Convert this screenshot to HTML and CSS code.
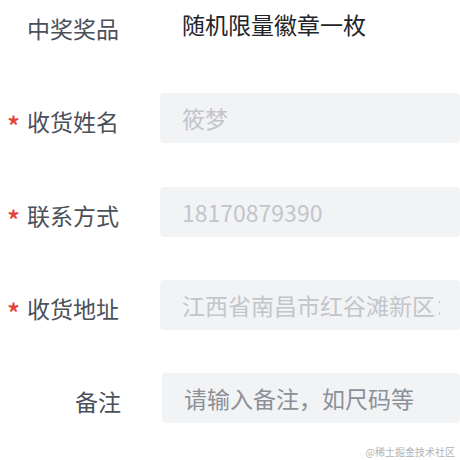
FILE: index.html
```html
<!DOCTYPE html>
<html lang="zh-CN">
<head>
<meta charset="utf-8">
<title>领奖信息</title>
<link rel="stylesheet" href="styles.css">
</head>
<body>
<div class="form">
  <div class="row">
    <div class="label">中奖奖品</div>
    <div class="value">随机限量徽章一枚</div>
  </div>
  <div class="row">
    <div class="label"><span class="req">*</span>收货姓名</div>
    <div class="field light"><span class="text">筱梦</span></div>
  </div>
  <div class="row">
    <div class="label"><span class="req">*</span>联系方式</div>
    <div class="field light"><span class="text">18170879390</span></div>
  </div>
  <div class="row">
    <div class="label"><span class="req">*</span>收货地址</div>
    <div class="field light"><span class="text">江西省南昌市红谷滩新区：红谷中大道</span></div>
  </div>
  <div class="row note">
    <div class="label">备注</div>
    <div class="field dark"><span class="text">请输入备注，如尺码等</span></div>
  </div>
</div>
<div class="watermark">@稀土掘金技术社区</div>
</body>
</html>
```
FILE: styles.css
```css
html, body {
  margin: 0;
  padding: 0;
  background: #ffffff;
}
body {
  width: 460px;
  height: 460px;
  position: relative;
  overflow: hidden;
  font-family: "Noto Sans CJK SC", "Noto Sans", sans-serif;
  font-size: 23px;
}
.form {
  display: flex;
  flex-direction: column;
  gap: 43.33px;
}
.row {
  display: grid;
  grid-template-columns: 119px minmax(0, 1fr);
  column-gap: 41px;
  align-items: center;
  height: 50px;
}
.row.note {
  margin-left: 2px;
}
.label {
  display: flex;
  justify-content: flex-end;
  align-items: center;
  color: #4b5059;
  line-height: 30px;
  padding-top: 6px;
  white-space: nowrap;
}
.req {
  color: #e5423b;
  font-size: 27px;
  font-weight: 500;
  margin-right: 7px;
  position: relative;
  top: 5px;
}
.value {
  color: #222428;
  padding-left: 22px;
  line-height: 30px;
  padding-bottom: 2px;
}
.field {
  min-width: 0;
  height: 50px;
  box-sizing: border-box;
  background: #f2f3f5;
  border-radius: 4px;
  padding: 0 20px 0 22px;
  display: flex;
  align-items: center;
}
.text {
  flex: 1;
  min-width: 0;
  white-space: nowrap;
  overflow: hidden;
  line-height: 36px;
}
.field.light {
  color: #c2c5cb;
}
.field.dark {
  color: #8c9097;
}
.watermark {
  position: absolute;
  right: 5px;
  bottom: 1px;
  font-size: 10px;
  color: #b3b3b3;
  font-family: "Noto Sans CJK SC", sans-serif;
}
```
